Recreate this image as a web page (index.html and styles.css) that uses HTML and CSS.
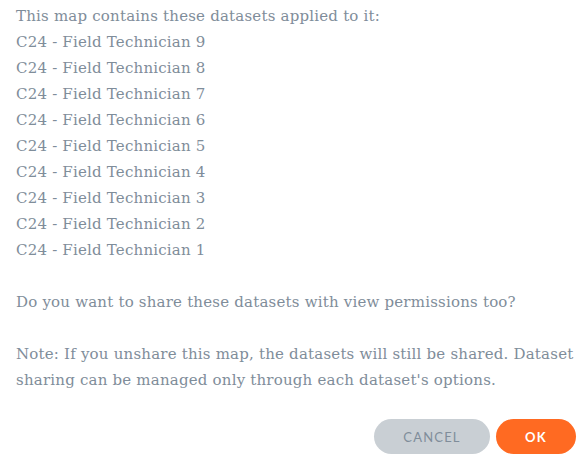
FILE: index.html
```html
<!DOCTYPE html>
<html lang="en">
<head>
<meta charset="utf-8">
<title>Share datasets</title>
<link rel="stylesheet" href="styles.css">
</head>
<body>
<div class="dialog">
  <div class="content">
    <p class="para">This map contains these datasets applied to it:<br>
    C24 - Field Technician 9<br>
    C24 - Field Technician 8<br>
    C24 - Field Technician 7<br>
    C24 - Field Technician 6<br>
    C24 - Field Technician 5<br>
    C24 - Field Technician 4<br>
    C24 - Field Technician 3<br>
    C24 - Field Technician 2<br>
    C24 - Field Technician 1</p>
    <p class="para">Do you want to share these datasets with view permissions too?</p>
    <p class="para">Note: If you unshare this map, the datasets will still be shared. Dataset sharing can be managed only through each dataset's options.</p>
  </div>
  <div class="actions">
    <button class="btn btn-cancel">CANCEL</button>
    <button class="btn btn-ok">OK</button>
  </div>
</div>
</body>
</html>
```
FILE: styles.css
```css
html, body {
  margin: 0;
  padding: 0;
  background: #ffffff;
}
.dialog {
  width: 587px;
  height: 462px;
  box-sizing: border-box;
  padding: 3px 11px 0 16px;
  display: flex;
  flex-direction: column;
}
.content {
  flex: 1;
}
.para {
  margin: 0 0 26px 0;
  font-family: "DejaVu Serif", serif;
  font-size: 15px;
  letter-spacing: 0.2px;
  line-height: 26px;
  color: #7f8d9a;
  font-weight: 300;
}
.actions {
  display: flex;
  justify-content: flex-end;
  gap: 6px;
  padding-bottom: 10px;
}
.btn {
  border: none;
  border-radius: 18px;
  height: 35px;
  font-family: "Lato", "Open Sans", sans-serif;
  font-size: 13px;
  letter-spacing: 1.2px;
  cursor: pointer;
}
.btn-cancel {
  width: 116px;
  background: #c9cfd4;
  color: #808d9a;
  font-weight: 400;
}
.btn-ok {
  width: 80px;
  background: #ff6a22;
  color: #ffffff;
  font-weight: 700;
}
```
